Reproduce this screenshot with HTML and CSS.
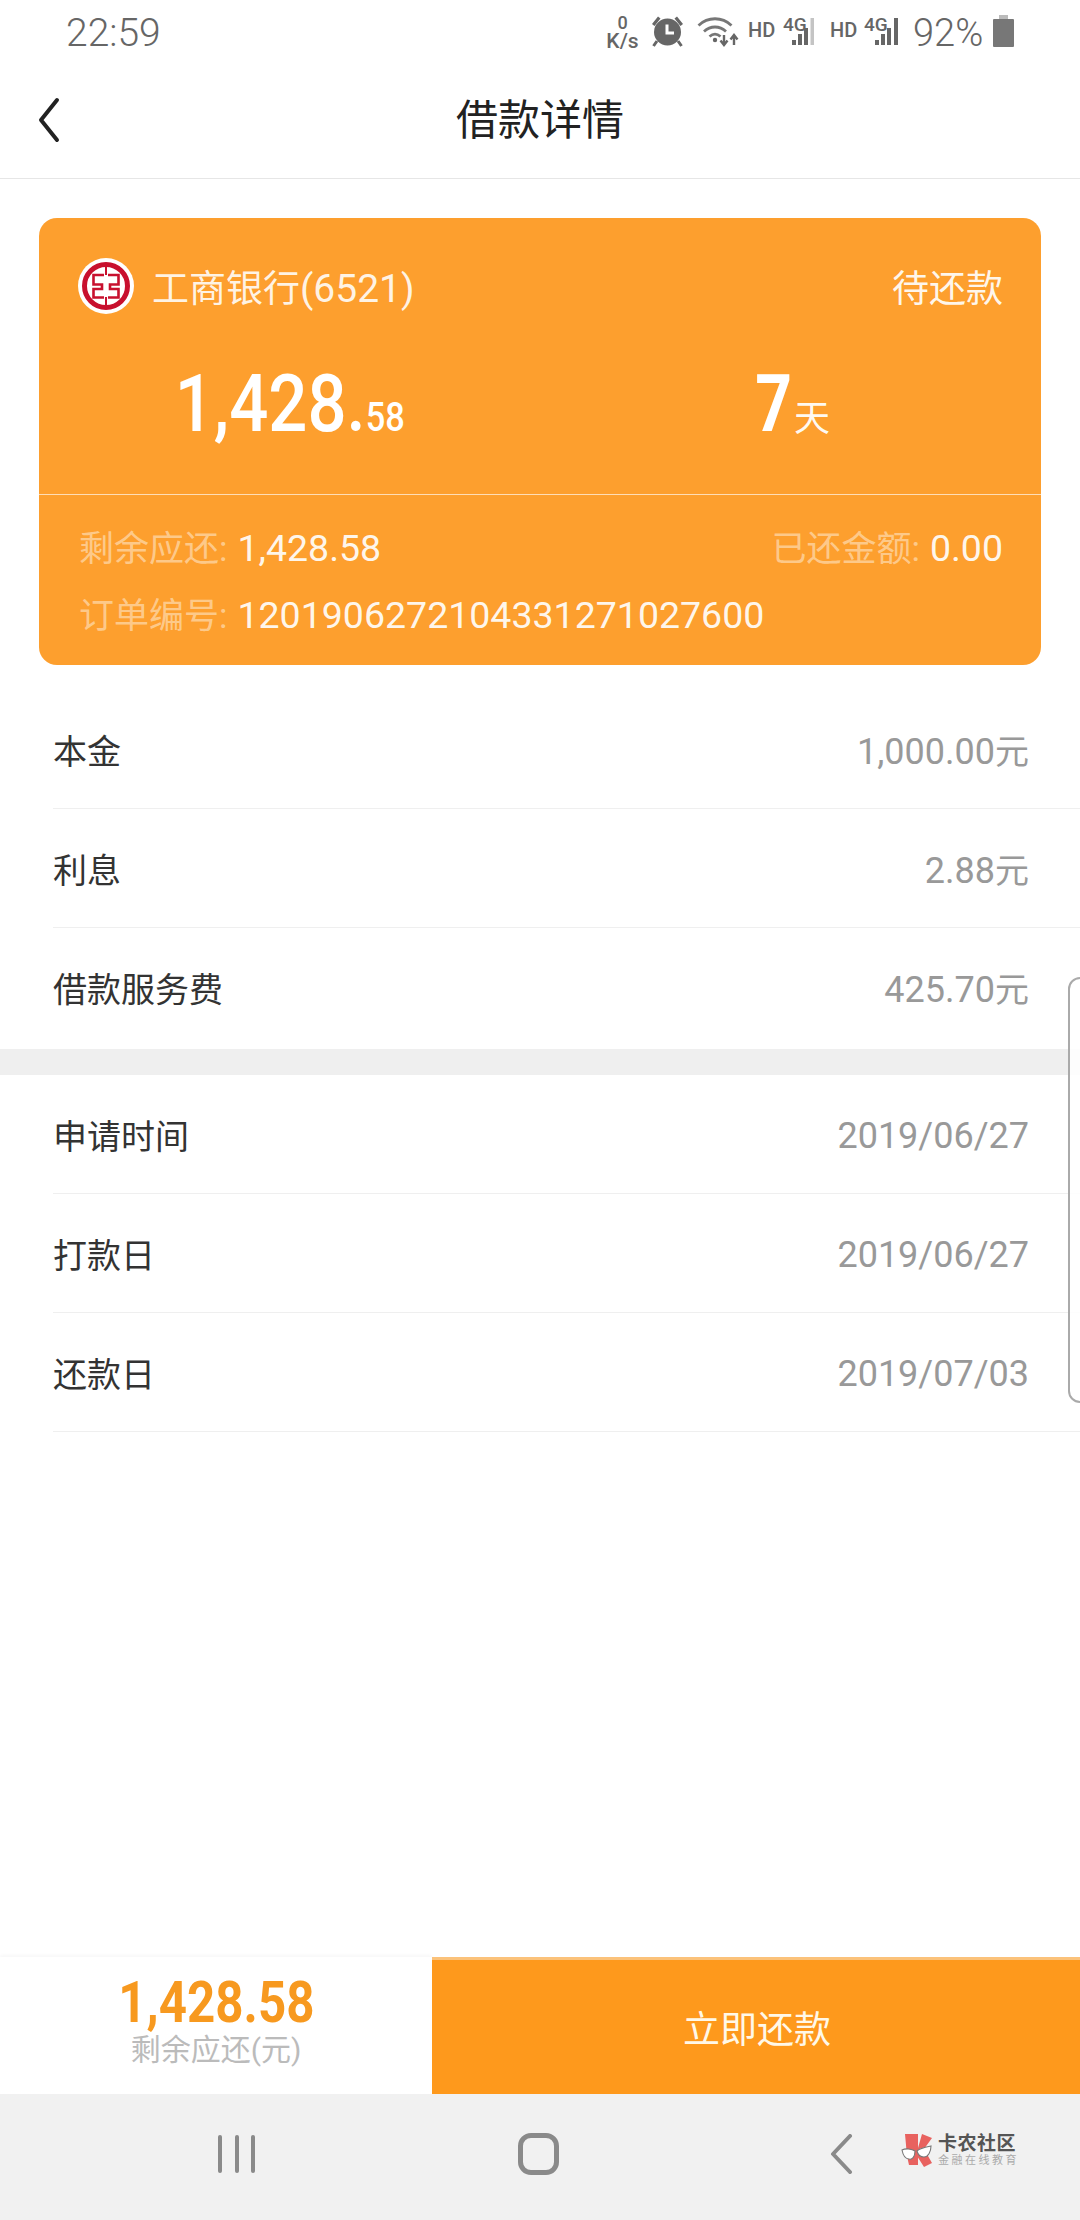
FILE: index.html
```html
<!DOCTYPE html>
<html lang="zh-CN">
<head>
<meta charset="utf-8">
<title>借款详情</title>
<link rel="stylesheet" href="styles.css">
</head>
<body>
<div class="page">
  <div class="status">
    <span class="time">22:59</span>
    <div class="status-right">
      <div class="speed"><span class="speed-num">0</span><span class="speed-unit">K/s</span></div>
      <svg class="alarm" viewBox="0 0 33 32"><path d="M1 9 7 1.500 9.500 3.500 3.500 11Z M32 9 26 1.500 23.500 3.500 29.500 11Z" fill="#666"/><circle cx="16.500" cy="17" r="13.500" fill="#666"/><path d="M16 9.500V18H23" fill="none" stroke="#fff" stroke-width="3"/><path d="M6 26 2.500 31M27 26 30.500 31" stroke="#666" stroke-width="3"/></svg>
      <svg class="wifi" viewBox="0 0 42 32"><g fill="none" stroke="#777" stroke-width="2.800"><path d="M1.500 10.500C11 1.500 25 1.500 34.500 10.500"/><path d="M7 16.500C13.500 10.500 22.500 10.500 29 16.500"/><path d="M12.500 21.500C16 18.500 20 18.500 23.500 21.500"/></g><circle cx="18" cy="25" r="2.200" fill="#666"/><path d="M27 20V29M23.500 25.500 27 30 30.500 25.500M37 30V21M33.500 24.500 37 20 40.500 24.500" fill="none" stroke="#666" stroke-width="2.400"/></svg>
      <span class="hd hd-first">HD</span>
      <div class="sig sig-first">
        <span class="sig-text">4G</span>
        <svg class="sig-bars" viewBox="0 0 25 29"><path d="M0 23h4v5H0zM6 17h4v11H6zM12 11h4v17h-4z" fill="#666"/><path d="M18.500 1h3.500v27h-3.500z" fill="#c4c4c4"/></svg>
      </div>
      <span class="hd hd-second">HD</span>
      <div class="sig sig-second">
        <span class="sig-text">4G</span>
        <svg class="sig-bars" viewBox="0 0 25 29"><path d="M0 23h4v5H0zM6 17h4v11H6zM12 11h4v17h-4zM19 1h4v27h-4z" fill="#666"/></svg>
      </div>
      <span class="battery-text">92%</span>
      <div class="battery"><span class="battery-cap"></span><span class="battery-body"></span></div>
    </div>
  </div>

  <header class="header">
    <svg class="back" viewBox="0 0 24 46"><path d="M20 3 4 23 20 43" fill="none" stroke="#222" stroke-width="4" stroke-linecap="round" stroke-linejoin="round"/></svg>
    <h1 class="title">借款详情</h1>
  </header>

  <main class="main">
    <section class="card">
      <div class="card-top">
        <div class="bank-row">
          <div class="bank">
            <svg class="bank-logo" viewBox="0 0 56 56"><circle cx="28" cy="28" r="28" fill="#fff"/><circle cx="28" cy="28" r="21.500" fill="none" stroke="#c8102e" stroke-width="5"/><path d="M28 7V17M28 39V49" stroke="#c8102e" stroke-width="2"/><path d="M26 17H15.500V26.500H24V31H15.500V39.500H26M30 17H40.500V26.500H32V31H40.500V39.500H30" fill="none" stroke="#c8102e" stroke-width="2.600"/></svg>
            <span class="bank-name">工商银行<span class="bank-card">(6521)</span></span>
          </div>
          <span class="bank-state">待还款</span>
        </div>
        <div class="figures">
          <div class="figure"><div class="amount"><span class="amount-big">1,428.</span><span class="amount-small">58</span></div></div>
          <div class="figure"><span class="days">7</span><span class="days-unit">天</span></div>
        </div>
      </div>
      <div class="card-bottom">
        <div class="info-row">
          <span><span class="info-label">剩余应还:</span> <span class="info-value">1,428.58</span></span>
          <span><span class="info-label">已还金额:</span> <span class="info-value">0.00</span></span>
        </div>
        <div class="info-row">
          <span><span class="info-label">订单编号:</span> <span class="info-value">1201906272104331271027600</span></span>
        </div>
      </div>
    </section>

    <section class="group group-fees">
      <div class="row"><span class="row-label">本金</span><span class="row-value">1,000.00<span class="row-unit">元</span></span></div>
      <div class="row"><span class="row-label">利息</span><span class="row-value">2.88<span class="row-unit">元</span></span></div>
      <div class="row row-plain"><span class="row-label">借款服务费</span><span class="row-value">425.70<span class="row-unit">元</span></span></div>
    </section>
    <div class="band"></div>
    <section class="group">
      <div class="row"><span class="row-label">申请时间</span><span class="row-value row-date">2019/06/27</span></div>
      <div class="row"><span class="row-label">打款日</span><span class="row-value row-date">2019/06/27</span></div>
      <div class="row"><span class="row-label">还款日</span><span class="row-value row-date">2019/07/03</span></div>
    </section>
    <div class="edge-panel"></div>
  </main>

  <footer class="footer">
    <div class="footer-sum">
      <span class="footer-amount">1,428.58</span>
      <span class="footer-label">剩余应还(元)</span>
    </div>
    <div class="footer-btn">立即还款</div>
  </footer>

  <nav class="nav">
    <div class="nav-recent"><span class="nav-bar"></span><span class="nav-bar"></span><span class="nav-bar"></span></div>
    <div class="nav-home"></div>
    <svg class="nav-back" viewBox="0 0 24 40"><path d="M21 2 4 20 21 38" fill="none" stroke="#8a8a8a" stroke-width="4" stroke-linecap="round" stroke-linejoin="round"/></svg>
    <div class="watermark">
      <svg class="wm-icon" viewBox="0 0 36 36"><path d="M5 2H18V33H9L7 24Z" fill="#e8625f"/><path d="M18 16 22 2 32 6 24 17 32 31 24 35 17 24Z" fill="#e8625f"/><path d="M2 18C6 16 12 17 15 19C15 25 12 28 9 27C5 27 3 23 2 18ZM17 19C20 16 26 15 31 14C31 20 28 25 24 25C20 25 18 23 17 19Z" fill="#fff" stroke="#777" stroke-width="1.100"/></svg>
      <div class="wm-text"><span class="wm-title">卡农社区</span><span class="wm-sub">金融在线教育</span></div>
    </div>
  </nav>
</div>
</body>
</html>
```

FILE: styles.css
```css
* { box-sizing: border-box; }
html, body { margin: 0; padding: 0; }
body { background: #fff; font-family: Roboto, "Noto Sans CJK SC", sans-serif; }
.page { width: 1080px; height: 2220px; display: flex; flex-direction: column; overflow: hidden; }

/* status bar */
.status { height: 60px; padding: 0 66px; display: flex; align-items: flex-start; justify-content: space-between; color: #666; }
.time { font-size: 39px; font-weight: 300; line-height: 38px; margin-top: 14px; }
.status-right { display: flex; align-items: flex-start; position: relative; }
.speed { width: 31px; margin-top: 15px; display: flex; flex-direction: column; align-items: center; font-weight: 500; color: #666; }
.speed-num { font-size: 18px; line-height: 16px; }
.speed-unit { font-size: 21px; line-height: 20px; white-space: nowrap; }
.alarm { width: 33px; height: 32px; margin: 15px 0 0 13px; }
.wifi { width: 42px; height: 32px; margin: 15px 0 0 13px; }
.hd { font-size: 20px; font-weight: 500; line-height: 20px; margin-top: 20px; width: 27px; color: #666; }
.hd-first { margin-left: 9px; }
.hd-second { margin-left: 13px; }
.sig { position: relative; width: 34px; height: 30px; margin-top: 17px; }
.sig-first { margin-left: 8px; }
.sig-second { margin-left: 7px; width: 36px; }
.sig-text { position: absolute; left: 0; top: -2px; font-size: 19px; font-weight: 500; line-height: 19px; color: #666; }
.sig-bars { position: absolute; right: 0; top: 0; width: 25px; height: 29px; }
.battery-text { font-size: 38px; font-weight: 300; line-height: 38px; margin: 14px 0 0 13px; width: 70px; }
.battery { width: 21px; margin: 15px 0 0 10px; display: flex; flex-direction: column; align-items: center; }
.battery-cap { width: 9px; height: 4px; background: #bbb; }
.battery-body { width: 21px; height: 28px; background: #777; border-radius: 1px; }

/* header */
.header { height: 119px; border-bottom: 1px solid #e6e6e6; display: flex; align-items: center; justify-content: center; position: relative; }
.back { position: absolute; left: 37px; top: 37px; width: 24px; height: 46px; }
.title { margin: 0; font-size: 42px; font-weight: 400; color: #222; line-height: 50px; position: relative; top: 2px; }

/* main */
.main { flex: 1; position: relative; padding-top: 39px; }
.card { margin: 0 39px; height: 447px; background: #fd9f2e; border-radius: 18px; color: #fff; overflow: hidden; }
.card-top { height: 277px; padding: 43px 38px 0 40px; border-bottom: 1px solid rgba(255, 255, 255, .65); }
.bank-row { display: flex; align-items: center; justify-content: space-between; height: 50px; }
.bank { display: flex; align-items: center; margin-left: -1px; }
.bank-logo { width: 56px; height: 56px; }
.bank-name { font-size: 37px; margin-left: 18px; color: rgba(255, 255, 255, .88); }
.bank-card { font-size: 39px; }
.bank-state { font-size: 37px; color: rgba(255, 255, 255, .92); }
.figures { display: flex; margin: 53px -38px 0 -40px; }
.figure { flex: 1; display: flex; justify-content: center; align-items: baseline; line-height: 80px; }
.amount { display: flex; align-items: baseline; transform: scaleX(.86); }
.amount-big { font-size: 80px; font-weight: 500; }
.amount-small { font-size: 40px; font-weight: 500; }
.days { font-size: 80px; font-weight: 700; transform: scaleX(.8); transform-origin: right center; }
.days-unit { font-size: 36px; margin: 0 5px 0 2px; color: rgba(255, 255, 255, .95); }
.card-bottom { padding: 17px 38px 0 40px; }
.info-row { display: flex; justify-content: space-between; height: 67px; align-items: center; white-space: nowrap; }
.info-label { font-size: 35px; color: rgba(255, 255, 255, .45); }
.info-value { font-size: 37.5px; margin-left: 6px; color: rgba(255, 255, 255, .92); }

/* rows */
.group-fees { margin-top: 25px; margin-bottom: 2px; }
.row { height: 119px; margin-left: 53px; padding-right: 51px; border-bottom: 1px solid #efefef; display: flex; align-items: center; justify-content: space-between; }
.row-plain { border-bottom: 0; }
.row-label { font-size: 34px; color: #333; }
.row-value { font-size: 36px; color: #999; }
.row-unit { font-size: 34px; }
.row-date { padding-top: 3px; }
.band { height: 26px; background: #efefef; }
.edge-panel { position: absolute; right: -12px; top: 798px; width: 24px; height: 426px; border: 2px solid #aaa; border-radius: 14px; background: rgba(255, 255, 255, .85); }

/* footer */
.footer { height: 137px; display: flex; }
.footer-sum { width: 432px; display: flex; flex-direction: column; align-items: center; box-shadow: 0 -2px 3px rgba(0, 0, 0, .03); }
.footer-amount { font-size: 58px; font-weight: 700; color: #f7991f; line-height: 60px; margin-top: 15px; transform: scaleX(.85); }
.footer-label { font-size: 30px; color: #bbb; line-height: 36px; }
.footer-btn { flex: 1; background: #fe991c; border-top: 3px solid #fbc27a; color: #fff8e8; font-size: 37px; padding-left: 2px; display: flex; align-items: center; justify-content: center; }

/* nav */
.nav { height: 126px; background: #f1f1f1; position: relative; display: flex; align-items: flex-start; }
.nav-recent { width: 37px; height: 38px; margin: 41px 0 0 218px; display: flex; justify-content: space-between; }
.nav-bar { width: 4px; height: 38px; background: #8a8a8a; border-radius: 2px; }
.nav-home { width: 41px; height: 42px; margin: 39px 0 0 263px; border: 5px solid #8a8a8a; border-radius: 13px; }
.nav-back { width: 24px; height: 40px; margin: 40px 0 0 270px; }
.watermark { position: absolute; left: 900px; top: 38px; display: flex; align-items: center; }
.wm-icon { width: 36px; height: 36px; }
.wm-text { display: flex; flex-direction: column; margin-left: 2px; }
.wm-title { font-size: 19px; font-weight: 700; color: #555; line-height: 21px; letter-spacing: .5px; white-space: nowrap; }
.wm-sub { font-size: 11px; color: #aaa; line-height: 14px; letter-spacing: 2.5px; white-space: nowrap; }
```
